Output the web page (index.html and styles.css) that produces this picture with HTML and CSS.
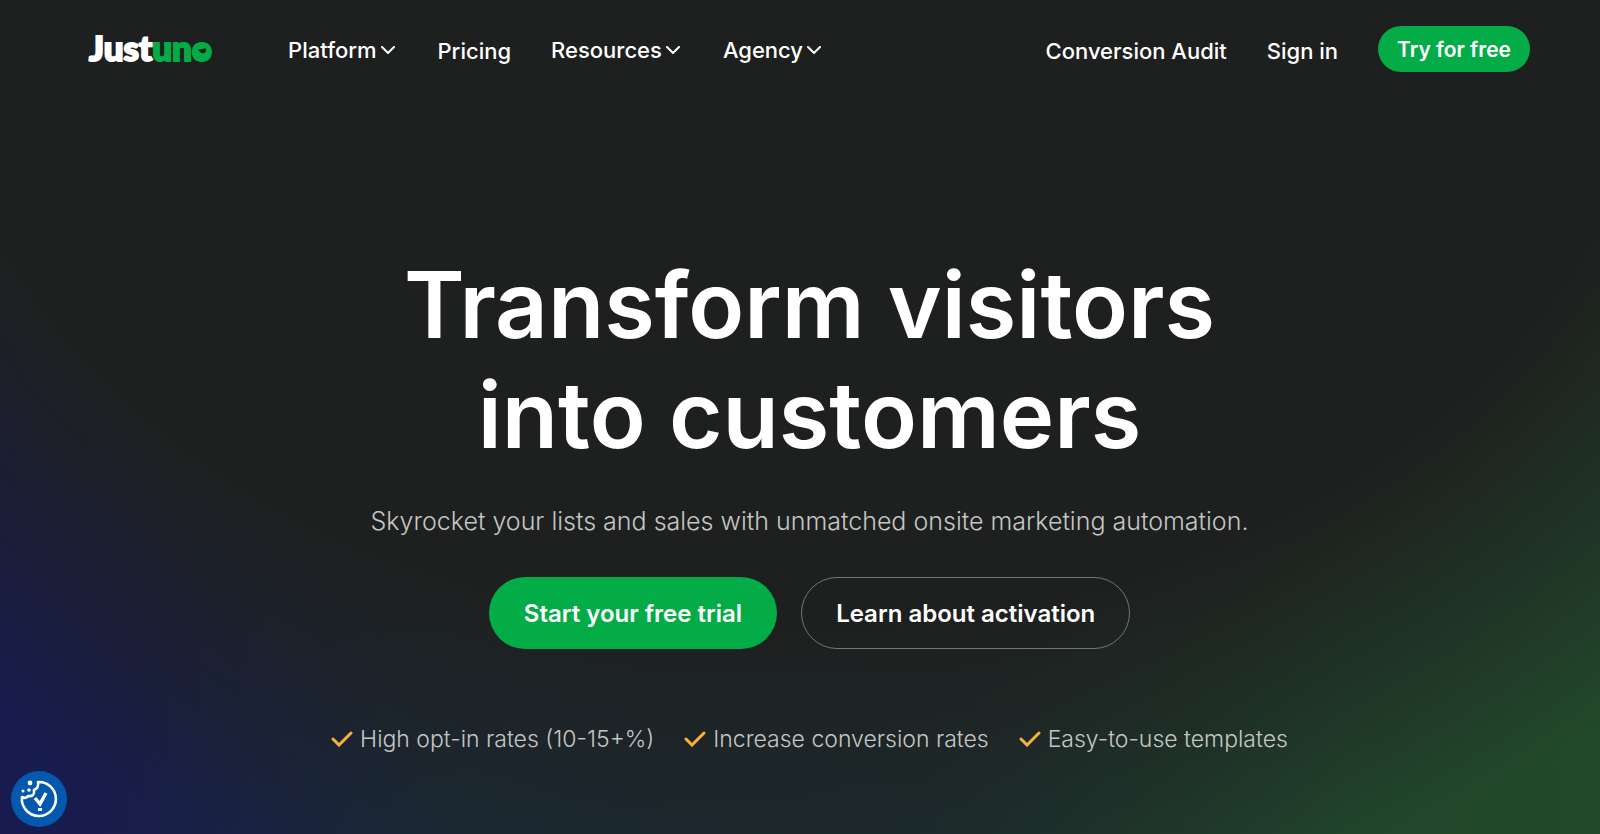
FILE: index.html
```html
<!DOCTYPE html>
<html lang="en">
<head>
  <meta charset="UTF-8">
  <meta name="viewport" content="width=device-width, initial-scale=1.0">
  <title>Justuno</title>
  <link rel="stylesheet" href="styles.css">
</head>
<body>

  <header class="header">
    <a href="#" class="logo">Just<span class="logo-green">un<span class="logo-o">o<svg class="logo-smile" viewBox="0 0 14 12"><rect class="logo-fill" x="1" y="0" width="12" height="12" rx="5"/><path d="M3 4 Q7 5 10 3 Q12 4 11 6 Q10 9 7 8 Q4 7 3 4Z"/></svg></span></span></a>
    <nav class="nav">
      <button class="nav-link nav-menu" type="button">Platform
        <svg class="chevron" viewBox="0 0 14 8"><path d="M1 1 L7 7 L13 1"/></svg>
      </button>
      <a class="nav-link" href="#">Pricing</a>
      <button class="nav-link nav-menu" type="button">Resources
        <svg class="chevron" viewBox="0 0 14 8"><path d="M1 1 L7 7 L13 1"/></svg>
      </button>
      <button class="nav-link nav-menu" type="button">Agency
        <svg class="chevron" viewBox="0 0 14 8"><path d="M1 1 L7 7 L13 1"/></svg>
      </button>
    </nav>
    <div class="nav-right">
      <a class="nav-link" href="#">Conversion Audit</a>
      <a class="nav-link" href="#">Sign in</a>
      <a class="btn-try" href="#">Try for free</a>
    </div>
  </header>

  <main class="hero">
    <h1>Transform visitors<br>into customers</h1>
    <p class="subtitle">Skyrocket your lists and sales with unmatched onsite marketing automation.</p>
    <div class="actions">
      <a class="btn btn-green" href="#">Start your free trial</a>
      <a class="btn btn-outline" href="#">Learn about activation</a>
    </div>
    <ul class="benefits">
      <li><svg class="check" viewBox="0 0 22 16"><path d="M2 8 L8 14 L20 2"/></svg>High opt-in rates (10-15+%)</li>
      <li><svg class="check" viewBox="0 0 22 16"><path d="M2 8 L8 14 L20 2"/></svg>Increase conversion rates</li>
      <li><svg class="check" viewBox="0 0 22 16"><path d="M2 8 L8 14 L20 2"/></svg>Easy-to-use templates</li>
    </ul>
  </main>

  <button class="cookie-button" type="button" aria-label="Cookie settings">
    <svg viewBox="0 0 56 56">
      <path class="cookie-line" d="M27 11 A17 17 0 1 1 11 26 Q15 28 17 25 Q24 26 23 19 Q28 17 27 11Z"/>
      <path class="cookie-check" d="M24 27 L29 33 L35 22"/>
      <rect x="27" y="37" width="4" height="3"/>
      <circle cx="19" cy="12" r="2.4"/>
      <circle cx="18" cy="19" r="1.8"/>
      <circle cx="12" cy="20" r="1.5"/>
    </svg>
  </button>

</body>
</html>
```

FILE: styles.css
```css
* {
  box-sizing: border-box;
}

/* dark ellipse fading out over the blue -> green strip */
body {
  margin: 0;
  min-height: 100vh;
  font-family: Inter, 'Liberation Sans', sans-serif;
  color: #fff;
  background-color: #1e201f;
  background-image:
    radial-gradient(ellipse 80% 112% at 50% 0%, #1e201f 67%, rgba(30, 32, 31, 0) 100%),
    linear-gradient(to right, #171b50 0%, #181d4a 8%, #1a2a38 27%, #1c2e31 58%, #21452b 84%, #22492b 100%);
}

a {
  color: inherit;
  text-decoration: none;
}

.header {
  display: flex;
  align-items: center;
  padding: 25px 70px 0 89px;
}

.logo {
  padding-bottom: 4px;
  font-family: Lato, Inter, sans-serif;
  font-size: 35px;
  font-weight: 900;
  line-height: 44px;
  -webkit-text-stroke: 2px currentColor;
}

.logo-green {
  color: #03ac46;
}

.logo-o {
  position: relative;
}

.logo-smile {
  position: absolute;
  left: 3px;
  bottom: 11px;
  width: 14px;
  height: 12px;
  fill: #1e201f;
}

.logo-fill {
  fill: #03ac46;
}

.nav {
  display: flex;
  gap: 40px;
  margin-left: 76px;
}

.nav-link {
  display: flex;
  align-items: center;
  gap: 4px;
  padding: 4px 0 0;
  border: none;
  background: none;
  color: #fff;
  font-family: inherit;
  font-size: 22px;
  font-weight: 500;
  line-height: 44px;
  cursor: pointer;
}

.nav-menu {
  padding: 3px 3px 1px 0;
}

.chevron {
  width: 14px;
  height: 8px;
  fill: none;
  stroke: #fff;
  stroke-width: 2;
  stroke-linecap: round;
}

.nav-right {
  display: flex;
  align-items: center;
  gap: 40px;
  margin-left: auto;
}

.btn-try {
  padding: 2px 19px 0;
  border-radius: 23px;
  background-color: #03ac46;
  font-size: 21px;
  font-weight: 600;
  line-height: 44px;
}

.hero {
  display: flex;
  flex-direction: column;
  align-items: center;
  padding: 177px 70px 60px 89px;
  text-align: center;
}

h1 {
  margin: 0;
  font-size: 92px;
  font-weight: 600;
  line-height: 110px;
}

.subtitle {
  margin: 31px 0 36px;
  color: #c4c6c5;
  font-size: 25px;
  font-weight: 300;
  line-height: 40px;
}

.actions {
  display: flex;
  gap: 24px;
}

.btn {
  padding: 2px 34px 0;
  border: 1px solid transparent;
  border-radius: 36px;
  font-size: 24px;
  font-weight: 600;
  line-height: 68px;
}

.btn-green {
  background-color: #03ac46;
}

.btn-outline {
  border-color: #747675;
}

.benefits {
  display: flex;
  gap: 30px;
  margin: 70px 0 0;
  padding: 0;
  list-style: none;
  color: #c4c6c5;
  font-size: 23px;
  font-weight: 300;
  line-height: 40px;
}

.benefits li {
  display: flex;
  align-items: center;
  gap: 7px;
}

.check {
  width: 22px;
  height: 16px;
  fill: none;
  stroke: #f9b03c;
  stroke-width: 3;
  stroke-linecap: round;
}

.cookie-button {
  position: fixed;
  left: 11px;
  bottom: 7px;
  width: 56px;
  height: 56px;
  padding: 0;
  border: none;
  border-radius: 50%;
  background-color: #0458ae;
  cursor: pointer;
}

.cookie-button svg {
  display: block;
  fill: #fff;
}

.cookie-line {
  fill: none;
  stroke: #fff;
  stroke-width: 2.6;
  stroke-linejoin: round;
}

.cookie-check {
  fill: none;
  stroke: #fff;
  stroke-width: 3.4;
}
```
